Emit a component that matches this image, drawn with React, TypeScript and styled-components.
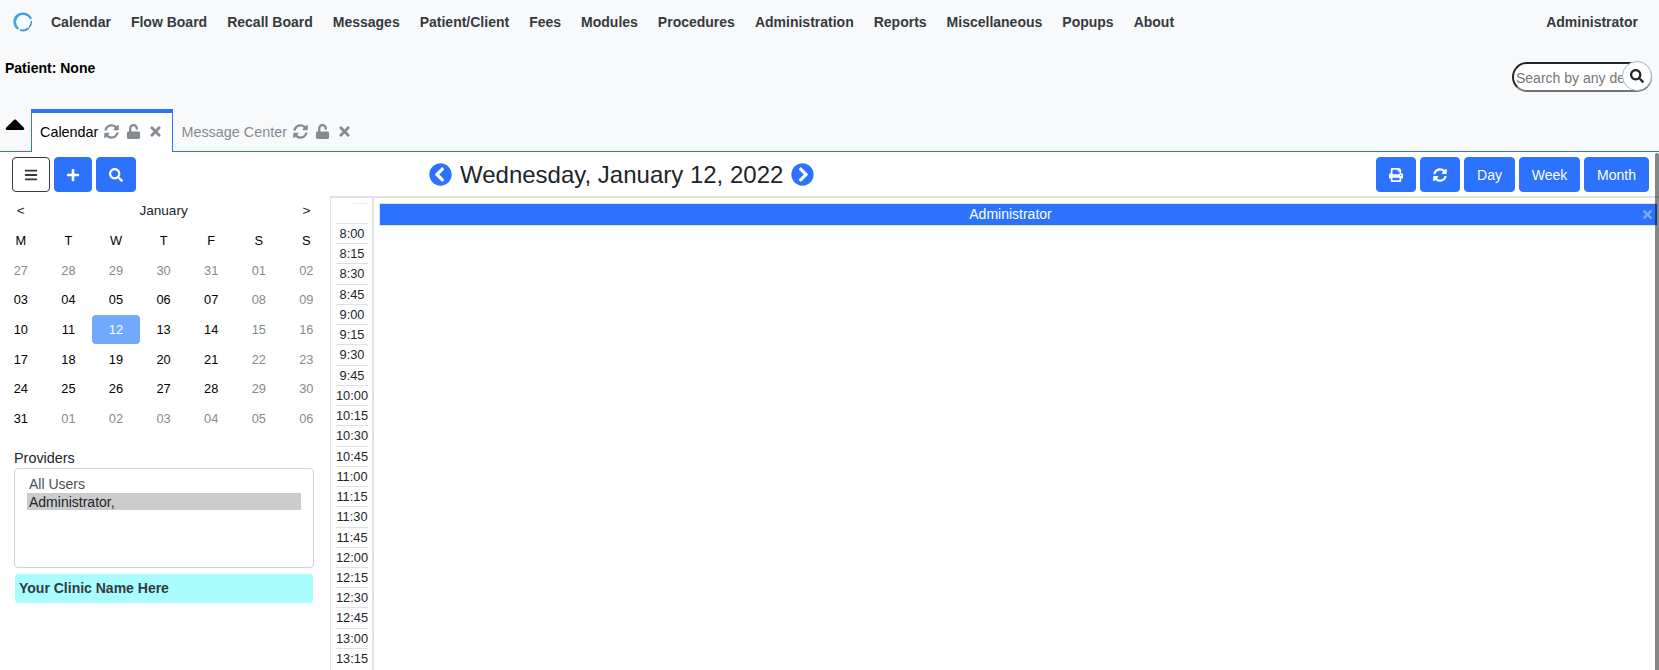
import React from 'react';
import styled, { createGlobalStyle } from 'styled-components';
import { FaBars, FaPlus, FaSearch, FaPrint, FaSyncAlt, FaUnlock, FaTimes, FaChevronCircleLeft, FaChevronCircleRight, FaCaretUp } from 'react-icons/fa';

const Global = createGlobalStyle`
  html, body { margin: 0; padding: 0; height: 670px; overflow: hidden; background: #fff; }
  body { font-family: "Liberation Sans", Arial, sans-serif; font-size: 14px; color: #212529; }
  * { box-sizing: border-box; }
`;
const Page = styled.div`height: 670px; display: flex; flex-direction: column; overflow: hidden;`;
const Header = styled.header`height: 152px; flex: none; background: #f8f9fa; border-bottom: 1px solid #2c72fd; display: flex; flex-direction: column;`;
const Nav = styled.nav`height: 44px; flex: none; display: flex; align-items: center; padding: 0 21px 0 13px;`;
const Menu = styled.div`display: flex; gap: 20px; margin-left: 18px; flex: 1;`;
const MenuItem = styled.span`font-size: 14px; font-weight: 700; color: #343a40; white-space: nowrap;`;
const PatientRow = styled.div`height: 65px; flex: none; display: flex; justify-content: space-between; padding: 16px 7px 0 5px;`;
const PatientLabel = styled.div`font-weight: 700; font-size: 14px; color: #000; line-height: 16px;`;
const SearchWrap = styled.div`position: relative; width: 140px; height: 32px;`;
const SearchInput = styled.input`display: block; width: 140px; height: 30px; margin-top: 2px; border-radius: 15px; background: #fff; border: 2px solid; border-color: #212529 #6c757d #6c757d #212529; color: #212529; font-family: inherit; font-size: 14px; padding: 1px 26px 0 2px; outline: none;`;
const SearchBtn = styled.div`position: absolute; right: 0; top: 1px; width: 30px; height: 30px; border-radius: 50%; background: #fff; border: 1px solid #adb5bd; display: flex; align-items: center; justify-content: center; color: #212529; font-size: 14px;`;
const TabsRow = styled.div`flex: 1; display: flex; align-items: flex-start;`;
const Toggle = styled.div`width: 31px; flex: none; height: 32px; font-size: 32px; line-height: 0; color: #000; margin-top: -1px; margin-left: -1px; margin-right: 1px;`;
const Tab = styled.div<{ $active?: boolean }>`height: 43px; margin-bottom: -1px; display: flex; align-items: center; gap: 6px; padding: 0 9px 2px 8px; font-size: 14.4px; color: ${p => p.$active ? '#000' : '#858b92'}; background: ${p => p.$active ? '#fff' : 'transparent'}; ${p => p.$active ? 'border: 1px solid #2c72fd; border-top: 4px solid #2c72fd; border-bottom: none;' : 'border-top: 4px solid transparent;'}`;
const TabIcons = styled.span`display: flex; align-items: center; gap: 7px; color: #858b92; font-size: 15px;`;
const Toolbar = styled.div`height: 44px; flex: none; display: grid; grid-template-columns: 417px auto 1fr; align-items: start; padding: 5px 10px 0 12px;`;
const BtnGroup = styled.div<{ $end?: boolean }>`display: flex; gap: 4px; justify-content: ${p => p.$end ? 'flex-end' : 'flex-start'};`;
const Btn = styled.div<{ $w: number; $outline?: boolean }>`width: ${p => p.$w}px; height: 35px; border-radius: 4px; display: flex; align-items: center; justify-content: center; font-size: 14px; background: ${p => p.$outline ? '#fff' : '#2c72fd'}; color: ${p => p.$outline ? '#343a40' : '#fff'}; border: 1px solid ${p => p.$outline ? '#343a40' : '#2c72fd'};`;
const DateNav = styled.div`display: flex; align-items: center; gap: 8px; font-size: 24px; color: #212529; height: 35px; svg { color: #2c72fd; font-size: 23px; }`;
const Body = styled.div`flex: 1; display: flex; min-height: 0;`;
const Side = styled.aside`width: 330px; flex: none; padding: 0 0 0 14px;`;
const Cal = styled.div`width: 314px; margin-left: -14px; color: #000;`;
const CalTop = styled.div`display: grid; grid-template-columns: repeat(7, 47.6px); padding-top: 7px; height: 30px; font-size: 13.6px; color: #212529; text-align: center; line-height: 16px; margin-left: -3px;`;
const MonthName = styled.span`grid-column: 2 / 7;`;
const Grid = styled.div`display: grid; grid-template-columns: repeat(7, 47.6px); grid-auto-rows: 29.6px; margin-left: -3px;`;
const Cell = styled.div<{ $muted?: boolean; $sel?: boolean }>`display: flex; align-items: center; justify-content: center; font-size: 12.8px; border-radius: 4px; color: ${p => p.$sel ? '#fff' : p.$muted ? '#858b92' : '#000'}; background: ${p => p.$sel ? '#70a9ff' : 'transparent'};`;
const ProvLabel = styled.div`margin-top: 17px; font-size: 14.4px; line-height: 16px; color: #212529;`;
const ProvBox = styled.div`width: 300px; height: 100px; margin-top: 2px; border: 1px solid #ced4da; border-radius: 4px; padding: 7px 12px; background: #fff; font-size: 14px; line-height: 17px;`;
const Opt = styled.div<{ $sel?: boolean }>`height: 17px; padding-left: 2px; color: ${p => p.$sel ? '#212529' : '#495057'}; background: ${p => p.$sel ? '#ccc' : 'transparent'}; line-height: ${p => p.$sel ? '19px' : '17px'};`;
const Clinic = styled.div`width: 298px; height: 29px; margin: 6px 0 0 1px; background: #a9fdfd; border-radius: 4px; padding-left: 4px; line-height: 29px; font-weight: 700; font-size: 14px; color: #343a40;`;
const Sched = styled.section`flex: 1; min-width: 0; display: flex; border-top: 2px solid #dee2e6; border-left: 1px solid #dee2e6;`;
const Times = styled.div`width: 43px; flex: none; border-right: 2px solid #dee2e6; padding: 5px 0 0 5px;`;
const TimeSpacer = styled.div`width: 32px; height: 20px; display: flex; justify-content: flex-end; &::before { content: ""; display: block; width: 15px; height: 1px; background: #e9ecef; }`;
const TimeCell = styled.div`width: 32px; height: 20.24px; border-top: 1px solid #dee2e6; font-size: 12.8px; line-height: 19.2px; text-align: center; color: #212529;`;
const Col = styled.div`flex: 1; padding: 5px 2px 0 5px; min-width: 0;`;
const ColHead = styled.div`position: relative; height: 23px; background: #2c72fd; color: #fff; text-align: center; font-size: 14px; line-height: 21px; padding-right: 16px; border: 1px solid #dee2e6; border-right: none;`;
const ColClose = styled.span`position: absolute; right: 3px; top: 4px; font-size: 13px; color: #7ea9fb; display: flex;`;
const Scroll = styled.div`position: absolute; right: 0; top: 153px; width: 4px; height: 517px; background: rgba(0, 0, 0, 0.48); border-radius: 2px 2px 0 0;`;

const menu = ['Calendar','Flow Board','Recall Board','Messages','Patient/Client','Fees','Modules','Procedures','Administration','Reports','Miscellaneous','Popups','About'];
const heads = ['M','T','W','T','F','S','S'];
const days: [string, boolean][] = [
  ...['27','28','29','30','31','01','02'].map(d => [d, true] as [string, boolean]),
  ...['03','04','05','06','07'].map(d => [d, false] as [string, boolean]), ['08', true], ['09', true],
  ...['10','11','12','13','14'].map(d => [d, false] as [string, boolean]), ['15', true], ['16', true],
  ...['17','18','19','20','21'].map(d => [d, false] as [string, boolean]), ['22', true], ['23', true],
  ...['24','25','26','27','28'].map(d => [d, false] as [string, boolean]), ['29', true], ['30', true],
  ['31', false], ...['01','02','03','04','05','06'].map(d => [d, true] as [string, boolean]),
];
const times: string[] = [];
for (let h = 8; h <= 13; h++) for (const m of ['00','15','30','45']) times.push(`${h}:${m}`);
const shownTimes = times.slice(0, 22);

const Logo = () => (
  <svg width="20" height="20" viewBox="0 0 20 20" fill="none">
    <path d="M5.5 2.9A8.4 8.4 0 0 0 4.3 16" stroke="#4aa3df" strokeWidth="2.8" strokeLinecap="round" />
    <path d="M6.5 2.6A8.4 8.4 0 0 1 17.6 6" stroke="#3f9bdc" strokeWidth="2.2" strokeLinecap="round" />
    <path d="M18.4 9.5A8.4 8.4 0 0 1 16.4 15.2" stroke="#2f86c8" strokeWidth="1.3" strokeLinecap="round" />
    <path d="M7.6 18.1A8.4 8.4 0 0 0 15 16.6" stroke="#3f9bdc" strokeWidth="2" strokeLinecap="round" />
  </svg>
);

export default function App() {
  return (
    <Page>
      <Global />
      <Header>
        <Nav>
          <Logo />
          <Menu>{menu.map(m => <MenuItem key={m}>{m}</MenuItem>)}</Menu>
          <MenuItem>Administrator</MenuItem>
        </Nav>
        <PatientRow>
          <PatientLabel>Patient: None</PatientLabel>
          <SearchWrap>
            <SearchInput placeholder="Search by any demographics" />
            <SearchBtn><FaSearch /></SearchBtn>
          </SearchWrap>
        </PatientRow>
        <TabsRow>
          <Toggle><FaCaretUp /></Toggle>
          <Tab $active>Calendar<TabIcons><FaSyncAlt /><FaUnlock /><FaTimes /></TabIcons></Tab>
          <Tab>Message Center<TabIcons><FaSyncAlt /><FaUnlock /><FaTimes /></TabIcons></Tab>
        </TabsRow>
      </Header>
      <Toolbar>
        <BtnGroup>
          <Btn $w={38} $outline><FaBars /></Btn>
          <Btn $w={38}><FaPlus /></Btn>
          <Btn $w={40}><FaSearch /></Btn>
        </BtnGroup>
        <DateNav><FaChevronCircleLeft />Wednesday, January 12, 2022<FaChevronCircleRight /></DateNav>
        <BtnGroup $end>
          <Btn $w={40}><FaPrint /></Btn>
          <Btn $w={40}><FaSyncAlt /></Btn>
          <Btn $w={51}>Day</Btn>
          <Btn $w={61}>Week</Btn>
          <Btn $w={65}>Month</Btn>
        </BtnGroup>
      </Toolbar>
      <Body>
        <Side>
          <Cal>
            <CalTop><span>&lt;</span><MonthName>January</MonthName><span>&gt;</span></CalTop>
            <Grid>
              {heads.map((h, i) => <Cell key={i}>{h}</Cell>)}
              {days.map(([d, muted], i) => <Cell key={i} $muted={muted} $sel={d === '12'}>{d}</Cell>)}
            </Grid>
          </Cal>
          <ProvLabel>Providers</ProvLabel>
          <ProvBox>
            <Opt>All Users</Opt>
            <Opt $sel>Administrator,</Opt>
          </ProvBox>
          <Clinic>Your Clinic Name Here</Clinic>
        </Side>
        <Sched>
          <Times>
            <TimeSpacer />
            {shownTimes.map(t => <TimeCell key={t}>{t}</TimeCell>)}
          </Times>
          <Col>
            <ColHead>Administrator<ColClose><FaTimes /></ColClose></ColHead>
          </Col>
        </Sched>
      </Body>
      <Scroll />
    </Page>
  );
}
